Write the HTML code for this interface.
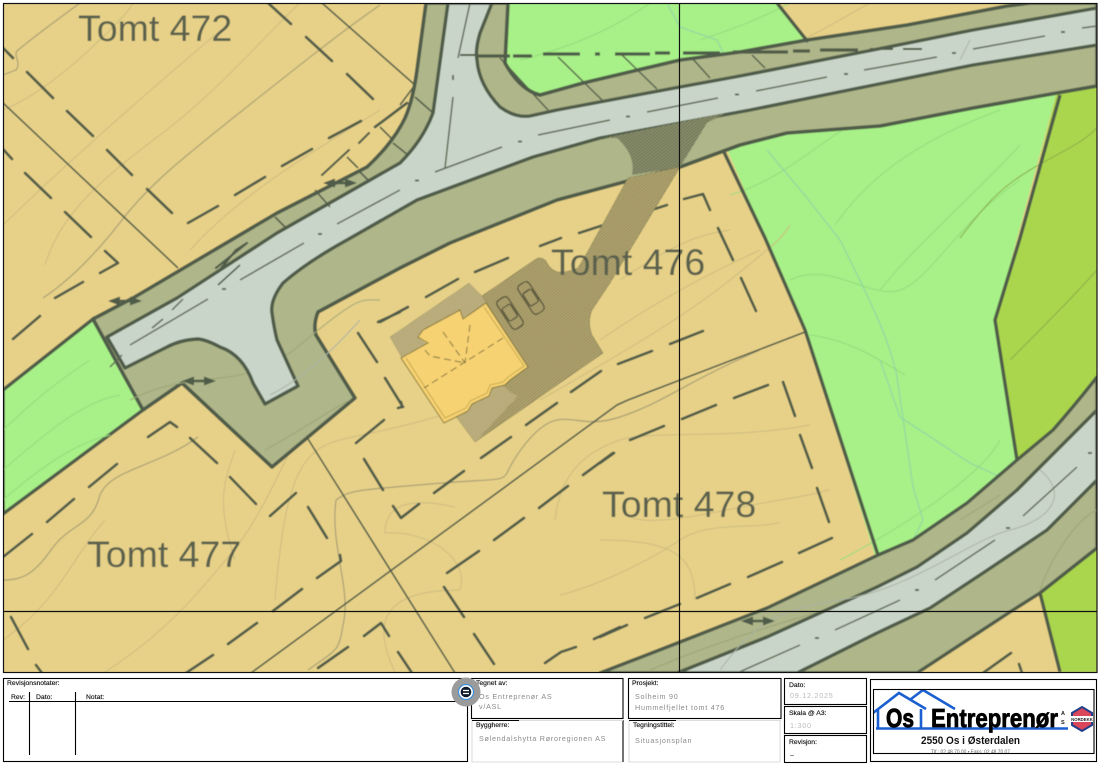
<!DOCTYPE html>
<html><head><meta charset="utf-8"><style>
html,body{margin:0;padding:0;background:#fff;width:1100px;height:765px;overflow:hidden}
svg{display:block;position:absolute;left:0;top:0}
.l{font:6.8px "Liberation Sans",sans-serif;fill:#111;stroke:#111;stroke-width:.15}
.v{font:7.2px "Liberation Sans",sans-serif;fill:#8a8a8a;letter-spacing:.75px}
.t{font:37.5px "Liberation Sans",sans-serif;fill:#5a614e}
</style></head><body>
<svg width="1100" height="765" viewBox="0 0 1100 765" xmlns="http://www.w3.org/2000/svg">
<defs>
<clipPath id="m"><rect x="3" y="3" width="1094" height="669"/></clipPath>
<clipPath id="lg"><rect x="873" y="689" width="221" height="64"/></clipPath>
<filter id="b" x="0" y="0" width="100%" height="100%"><feGaussianBlur stdDeviation=".45"/></filter>
<pattern id="h1" width="2.4" height="2.4" patternUnits="userSpaceOnUse" patternTransform="rotate(-38)"><rect width="2.4" height="2.4" fill="#b4a66f"/><rect width="2.4" height="1" fill="#938a5e"/></pattern>
<pattern id="h2" width="2" height="2" patternUnits="userSpaceOnUse" patternTransform="rotate(-38)"><rect width="2" height="2" fill="#c6b784"/><rect width="2" height=".7" fill="#a0966a"/></pattern>
<pattern id="h3" width="2.4" height="2.4" patternUnits="userSpaceOnUse" patternTransform="rotate(-38)"><rect width="2.4" height="2.4" fill="#8f9470"/><rect width="2.4" height="1" fill="#646b50"/></pattern>
<g id="ar"><path d="M-14,0H14" stroke="#4f5b48" stroke-width="2.4" fill="none"/><path d="M-17,0L-5,-4.500V4.500ZM17,0L5,-4.500V4.500Z" fill="#4f5b48"/></g>
</defs>
<g clip-path="url(#m)" filter="url(#b)">
<rect x="0" y="0" width="1100" height="675" fill="#e7d188"/>
<!-- greens -->
<polygon points="505,3 777,3 810,44 505,105" fill="#a8f088"/>
<polygon points="3,390 93,319 143,410 3,514" fill="#a8f088" stroke="#4f5b48" stroke-width="3.4"/>
<polygon points="723,140 765,238 805,330 878,565 1030,470 995,320 1060,80" fill="#a8f088"/>
<polygon points="1060,80 1097,76 1097,385 1025,470 1017,460 995,320 1020,238" fill="#aad64e"/>
<polygon points="1040,593 1030,600 1097,540 1097,672 1060,672" fill="#aad64e"/>
<!-- contours tan -->
<g fill="none" stroke="#cdbb80" stroke-width="1" stroke-linejoin="round">
<path d="M3,110C40,95 80,60 110,30S125,10 135,3"/>
<path d="M45,265C60,215 100,180 160,135S265,35 300,3"/>
<path d="M190,250C240,195 300,160 380,110"/>
<path d="M3,225C70,160 150,90 215,35"/>
<path d="M3,640C60,600 70,560 105,520"/>
<path d="M105,672C170,630 200,590 230,555S285,460 300,430"/>
<path d="M235,560C215,500 225,480 235,450"/>
<path d="M275,600C285,480 300,450 340,440S450,420 500,390"/>
<path d="M395,672C370,620 385,590 460,590 470,560 430,530 385,533 385,510 400,495 455,507"/>
<path d="M560,595C600,585 650,560 680,540S760,530 780,522"/>
<path d="M555,520C560,470 590,450 620,440S730,440 810,425"/>
<path d="M625,515C650,530 720,510 780,500S820,490 830,490"/>
<path d="M600,540C680,540 695,560 695,600"/>
<path d="M540,400C610,360 680,320 730,280S780,240 790,225"/>
<path d="M620,280C680,240 700,235 730,230"/>
<path d="M600,340C680,285 740,260 760,250"/>
<path d="M870,3C830,25 815,35 800,40"/>
</g>
<g fill="none" stroke="#a89f74" stroke-width="1.2" stroke-linejoin="round">
<path d="M3,75L16,70C22,62 12,55 18,50S50,25 80,3"/>
<path d="M43,298C70,280 95,255 122,220S180,160 243,110 340,33 380,5"/>
<path d="M2,580C20,580 32,577 51,550S91,527 99,498 158,467 198,437 221,420"/>
<path d="M336,500C350,490 356,490 443,483S490,487 526,443 573,433 620,417 680,385 760,350 805,332"/>
<path d="M336,500C330,543 350,587 344,620S340,647 308,670"/>
</g>
<!-- green contours -->
<g fill="none" stroke="#93dc7d" stroke-width="1">
<path d="M520,60C600,40 640,10 650,3M700,40C760,20 780,8 790,3"/>
<path d="M3,470C60,420 90,400 120,395M3,430C40,395 60,380 90,360M3,500C60,450 90,440 110,435"/>
<path d="M730,195C780,180 810,150 850,125M835,225C870,175 920,140 1000,110M880,290C920,240 980,190 1020,145"/>
<path d="M790,280C830,260 870,300 900,290S960,220 1020,180"/>
<path d="M840,560C880,540 980,480 1000,440M810,335C850,340 880,360 905,375"/>
</g>
<path d="M960,238C985,205 1000,188 1030,170S1080,145 1097,128M1010,360C1040,330 1070,300 1097,270" fill="none" stroke="#8ab04a" stroke-width="1.1"/>
<g fill="none" stroke="#8fd6a4" stroke-width="1.1">
<path d="M767,150L807,198 840,240C870,300 890,340 897,377L913,487 923,520 913,540 930,600 932,660"/>
<path d="M880,360L900,417 970,463 1007,480 1037,517 1070,560"/>
<path d="M667,3L680,27 717,40 733,73 740,107"/>
</g>
<!-- verge -->
<path d="M93,319L133,298 277,213 367,167Q393,143 405,118 413,100 417,70L426,3H508L505,63Q520,90 540,95L583,83 680,60 740,52 807,40 907,25 1007,6 1030,3H1097V86L1057,93 973,108 880,126 787,133 740,145 680,167 557,200 450,243 400,268 318,312Q313,325 316,335L355,398 272,467 182,383 143,410Z" fill="#afb689" stroke="#4f5b48" stroke-width="3.6" stroke-linejoin="round"/>
<path d="M600,673L680,642 767,608 878,555 913,540 967,503 1017,460 1053,430Q1075,405 1097,377V548L1040,593 1010,612 917,673Z" fill="#afb689" stroke="#4f5b48" stroke-width="3.4" stroke-linejoin="round"/>
<g fill="none" stroke="#9ca578" stroke-width="1"><path d="M130,400C200,365 240,395 300,345S360,300 380,300M265,450C310,425 330,410 350,400"/><path d="M650,670C720,640 790,620 860,600M960,520L1000,495M1040,590C1050,560 1075,520 1097,510"/></g>
<!-- road -->
<path d="M107,337L177,298 277,233 400,163Q423,140 433,113L448,3H492L480,33Q475,50 477,60 479,85 500,107 515,118 530,116L557,110 680,87 740,76 873,50 973,30 1097,8V45L973,65 750,110 600,138 533,157 417,200 347,240Q307,262 283,283 270,300 272,313 274,328 277,340L298,386 265,404 253,383Q243,355 220,347 205,339 197,339 180,340 167,347L125,368Z" fill="#c9d5c8" stroke="#4f5b48" stroke-width="3.4" stroke-linejoin="round"/>
<path d="M677,673L767,637 877,587 917,567 967,533 1017,490 1067,440 1097,410V480L1047,530 983,573 930,608 877,633 797,673Z" fill="#c9d5c8" stroke="#4f5b48" stroke-width="3.4" stroke-linejoin="round"/>
<path d="M270,395C290,385 320,365 360,320M720,670C750,630 770,610 840,600S970,540 1010,530 1070,495 1040,470M960,60L970,40" fill="none" stroke="#aab3a5" stroke-width="1"/>
<!-- center lines -->
<g stroke="#5d6856" stroke-width="1.5" fill="none">
<path d="M435,172L502,147M538,135L610,120M647,112L718,98M445,168L453,97M458,58L470,3M756,91L827,77M864,70L937,57M973,49L1045,36M1082,28L1097,26M337,224L400,190M240,280L304,243M130,345L208,299M172,310L183,299M152,328L163,319M110,367L122,355M737,673L800,645M835,630L900,600M935,580L995,540M1023,516L1077,467"/>
<path stroke-width="1.9" d="M518,141.500h4M626,116.500h4M735,94.500h4M415,180.500h4M844,74h4M952,53h4M1061,32h4M318,234h4M222,289h4M815,638h4M915,590h4M1006,528h4M1088,453h4M453,75v5"/>
</g>
<!-- thin cadastral -->
<g stroke="#4f5b48" stroke-width="1.6" fill="none">
<path d="M2,102L178,268M322,3L415,85M308,439L455,673M805,332L628,400 617,405 251,673"/>
<path d="M415,97L432,112M393,143L408,155M380,127L393,140M358,170L370,182M347,157L358,168M315,190L330,207M275,217L287,229"/>
<path d="M500,58L548,110M558,57L602,100M622,55L657,89M692,58L710,78M752,55L765,68" stroke-width="1.4"/>
<path d="M415,85L400,105M240,265L218,285"/>
</g>
<g stroke="#4f5b48" stroke-width="3.4" fill="none">
<path d="M777,3L808,42M723,150L765,238 805,330 878,555M1060,95L1020,238 995,320 1017,460M1040,593L1060,672"/>
</g>
<!-- property dash-dot -->
<g stroke="#4f5b48" fill="none" stroke-width="3.2">
<path d="M477,56H510M513,56H532M543,54H580M595,54H600M615,54H650M655,53H670M683,53H720M733,52H788M793,51H810M820,50H858"/>
<path stroke-width="2" d="M870,49H893M903,49H922M460,55H477"/>
</g>
<!-- dashes -->
<g stroke="#505b48" stroke-width="2.7" fill="none" stroke-linecap="round" stroke-linejoin="round">
<path d="M2,47L13,58M27,72L53,98M67,111L93,136M107,150L132,175M147,189L172,213M188,223L218,206M235,195L265,177M282,166L312,149M329,138L361,121M375,127L407,103M267,2L291,24M306,37L332,61M347,74L373,99M2,148L12,159M25,173L51,198M65,212L91,237M105,251L118,263 100,273M83,282L55,298M40,316L13,339"/>
<path d="M148,437L170,422 177,427M190,438L217,463M230,477L256,504M117,464L89,487M74,499L47,522M32,534L3,557M296,493L270,516M308,507L327,538M340,555L341,561 317,578M302,589L273,611M257,623L228,644M213,655L186,673M11,617L28,649M36,665L42,673M384,420L356,443M364,459L383,490M393,506L401,518 419,504M464,471L434,493M511,437L481,458M557,403L526,425M613,453L583,475M568,486L539,508M524,518L494,540M479,551L447,573M444,587L464,617M474,634L494,664M364,636L381,623 389,636M348,647L318,668M398,652L412,673M545,663L561,652 576,647M620,627L594,639M401,402L402,407 398,408"/>
<path d="M358,333L377,362M378,322L400,312M508,258L475,272M458,279L426,297M408,307L380,322M385,378L403,407"/>
<path d="M684,199L703,194 710,210M667,205L633,216M613,222L579,233M561,238L540,246M718,228L733,260M741,278L756,311M703,331L670,344M652,351L618,364M601,371L571,392M768,385L734,398M783,382L795,416M800,435L812,468M817,488L829,522M832,538L799,553M782,562L748,577M730,584L697,598M680,604L645,618M627,625L600,637M716,405L682,419M664,426L630,440M614,453L600,463M1011,653L983,673M1019,664L1022,673"/>
<path d="M216,268L247,243 236,250 218,272M322,175L349,150M359,143L369,133" stroke-width="2.2"/>
</g>
<!-- arrows -->
<use href="#ar" x="125" y="301"/><use href="#ar" x="671" y="147"/><use href="#ar" x="340" y="183"/><use href="#ar" x="199" y="381"/><use href="#ar" x="758" y="621"/>
<!-- driveway over verge -->
<path d="M604,138L725,113 707,123 680,167 632,175Q636,155 617,138Z" fill="url(#h3)"/>
<!-- driveway and parking -->
<path d="M628,178L680,167 610,283 592,310Q587,322 592,335L603,353 475,442 455,415 510,378 528,367 482,296 536,259Q541,256 546,261 550,270 558,272 566,273 578,268L587,253Z" fill="url(#h1)" stroke="#8b8356" stroke-width=".6"/>
<path d="M469,283L482,296 486,303 462,320 459,310 440,323 425,329 418,338 428,345 405,360 402,358 390,337Z" fill="url(#h2)" stroke="#a59a6c" stroke-width=".5"/>
<path d="M444,422L467,410 470,403 488,395 490,387 503,385 510,392 518,396 475,442 455,415Z" fill="url(#h2)"/>
<!-- house -->
<path d="M486,303L528,367 510,380 505,385 492,388 489,396 472,404 468,411 444,423 401,358 428,343 418,337 423,330 460,310 463,319Z" fill="#f6d272" stroke="#8a7a3a" stroke-width="1"/>
<path d="M484,307L524,366 508,377 503,382 490,385 487,393 470,401 466,408 445,418 406,358" fill="none" stroke="#b59a45" stroke-width=".7"/>
<path d="M503,338L424,388M443,332L465,363M470,325L465,363M425,350L430,356 465,363" fill="none" stroke="#6d6438" stroke-width=".9" stroke-dasharray="7 4"/>
<!-- cars -->
<g fill="none" stroke="#55523a" stroke-width="1.3">
<g transform="translate(510,313) rotate(57)"><rect x="-17" y="-6.500" width="34" height="13" rx="4"/><rect x="-8" y="-5" width="15" height="10" rx="2"/></g>
<g transform="translate(531,298) rotate(57)"><rect x="-17" y="-6.500" width="34" height="13" rx="4"/><rect x="-8" y="-5" width="15" height="10" rx="2"/></g>
</g>
<text class="t" x="78" y="41">Tomt 472</text>
<text class="t" x="551" y="275">Tomt 476</text>
<text class="t" x="602" y="517">Tomt 478</text>
<text class="t" x="87" y="567">Tomt 477</text>
</g>
<!-- frame and crosshair -->
<rect x="3.500" y="3.500" width="1093.500" height="669" fill="none" stroke="#111" stroke-width="1.2"/>
<path d="M679.500,3V672M3,611.500H1097" stroke="#111" stroke-width="1.2"/>
<!-- title block -->
<g fill="none" stroke="#000" stroke-width="1.1">
<rect x="3.500" y="678.500" width="464" height="83"/>
<path d="M9,701.500H467M29.500,692V755M75.500,692V755"/>
<rect x="471.500" y="678.500" width="151.500" height="40"/>
<rect x="628.500" y="678.500" width="152.500" height="40"/>
<rect x="784.500" y="678.500" width="82" height="26"/>
<rect x="784.500" y="706.500" width="82" height="27"/>
<rect x="784.500" y="735.500" width="82" height="27"/>
<rect x="870.500" y="679.500" width="226" height="82"/>
</g>
<path d="M472,720.500V762H622M629,720.500V762H780V720" fill="none" stroke="#ddd" stroke-width="1.1"/>
<path d="M623,720V762" stroke="#000" stroke-width="1.1"/>
<path d="M519,720.500H623M676,720.500H781" stroke="#ddd" stroke-width="1"/>
<path d="M472,720.500H519M629,720.500H676" stroke="#000" stroke-width="1"/>
<text class="l" x="7" y="685">Revisjonsnotater:</text>
<text class="l" x="11" y="699">Rev:</text><text class="l" x="36" y="699">Dato:</text><text class="l" x="86" y="699">Notat:</text>
<text class="l" x="476" y="685">Tegnet av:</text>
<text class="v" x="479" y="699">Os Entreprenør AS</text>
<text class="v" x="479" y="709">v/ASL</text>
<text class="l" x="476" y="727">Byggherre:</text>
<text class="v" x="479" y="741">Sølendalshytta Røroregionen AS</text>
<text class="l" x="632" y="685">Prosjekt:</text>
<text class="v" x="635" y="699">Solheim 90</text>
<text class="v" x="635" y="710">Hummelfjellet tomt 476</text>
<text class="l" x="633" y="727">Tegningstittel:</text>
<text class="v" x="635" y="743">Situasjonsplan</text>
<text class="l" x="789" y="687">Dato:</text>
<text class="v" x="790" y="698" style="fill:#bbb">09.12.2025</text>
<text class="l" x="789" y="715">Skala @ A3:</text>
<text class="v" x="790" y="728" style="fill:#bbb">1:300</text>
<text class="l" x="789" y="744">Revisjon:</text>
<text class="v" x="790" y="757" style="fill:#222">–</text>
<!-- comment bubble -->
<circle cx="466" cy="692" r="14.500" fill="#9b9b9b"/>
<circle cx="466" cy="692" r="7.500" fill="#fff" stroke="#3f8fdc" stroke-width="1.2"/>
<circle cx="466" cy="692" r="5.300" fill="#0d1a2c"/>
<path d="M463,690.500H469M463,693.500H469" stroke="#fff" stroke-width="1.300"/>
<!-- logo -->
<g clip-path="url(#lg)">
<path d="M873,713L899,693 926,709M911,699L923,690 955,709M878,709V728M921,709V728M876,728.500H1068" fill="none" stroke="#1b5fd0" stroke-width="2.600"/>
<text x="886" y="727" font-family="Liberation Sans,sans-serif" font-weight="700" font-size="26" textLength="28" lengthAdjust="spacingAndGlyphs" stroke="#000" stroke-width=".9">Os</text>
<text x="931" y="727" font-family="Liberation Sans,sans-serif" font-weight="700" font-size="26" textLength="127" lengthAdjust="spacingAndGlyphs" stroke="#000" stroke-width=".8">Entreprenør</text>
<text x="1061" y="715" font-family="Liberation Sans,sans-serif" font-weight="700" font-size="5.500" fill="#222">A</text>
<text x="1061" y="724" font-family="Liberation Sans,sans-serif" font-weight="700" font-size="5.500" fill="#222">S</text>
<polygon points="1082,707 1092,713 1092,725 1082,731 1072,725 1072,713" fill="#d9485a" stroke="#233f8a" stroke-width="2"/>
<rect x="1071" y="716" width="22" height="6" fill="#fff"/>
<text x="1082" y="721" text-anchor="middle" font-family="Liberation Sans,sans-serif" font-weight="700" font-size="4.300" fill="#222">NORDEKK</text>
<text x="921" y="744" font-family="Liberation Sans,sans-serif" font-weight="700" font-size="11" textLength="99" lengthAdjust="spacingAndGlyphs" fill="#111">2550 Os i Østerdalen</text>
<text x="931" y="753.500" font-family="Liberation Sans,sans-serif" font-size="5.800" textLength="79" lengthAdjust="spacingAndGlyphs" fill="#666">Tlf.: 02 48 70 00 • Faks: 02 48 70 07</text>
</g>
<rect x="873.500" y="689.500" width="220.500" height="64" fill="none" stroke="#000" stroke-width="1.100"/>
</svg>
</body></html>
